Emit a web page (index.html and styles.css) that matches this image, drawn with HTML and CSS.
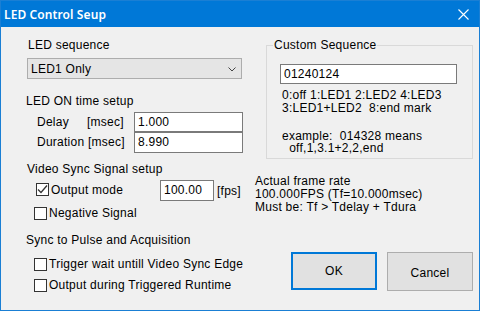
FILE: index.html
```html
<!DOCTYPE html>
<html>
<head>
<meta charset="utf-8">
<link rel="stylesheet" href="styles.css">
</head>
<body>
<div class="window">
  <div class="titlebar">
    <span class="title">LED Control Seup</span>
    <svg class="close" width="11" height="11" viewBox="0 0 11 11"><path d="M0.5 0.5 L10.5 10.5 M10.5 0.5 L0.5 10.5" stroke="#fff" stroke-width="1.1" fill="none"/></svg>
  </div>
  <div class="client">
    <div class="left">
      <div class="lbl seq-lbl">LED sequence</div>
      <div class="select">
        <span>LED1 Only</span>
        <svg class="chev" width="8" height="5" viewBox="0 0 8 5"><path d="M0.5 0.5 L4 4 L7.5 0.5" stroke="#444" stroke-width="1" fill="none"/></svg>
      </div>
      <div class="lbl on-lbl">LED ON time setup</div>
      <div class="field-row row-delay">
        <span class="fl"><span class="fl-name">Delay</span>[msec]</span>
        <span class="input w-time">1.000</span>
      </div>
      <div class="field-row row-dur">
        <span class="fl">Duration [msec]</span>
        <span class="input w-time">8.990</span>
      </div>
      <div class="lbl vs-lbl">Video Sync Signal setup</div>
      <div class="field-row row-out">
        <span class="cbl cbl-out"><span class="cb"><svg width="11" height="11" viewBox="0 0 11 11"><path d="M1 5.5 L4 8.5 L10 1.5" stroke="#333" stroke-width="1.3" fill="none"/></svg></span><span>Output mode</span></span>
        <span class="input w-fps">100.00</span>
        <span class="unit">[fps]</span>
      </div>
      <div class="cbl row-neg"><span class="cb"></span><span>Negative Signal</span></div>
      <div class="lbl sync-lbl">Sync to Pulse and Acquisition</div>
      <div class="cbl row-trig"><span class="cb"></span><span>Trigger wait untill Video Sync Edge</span></div>
      <div class="cbl row-odr"><span class="cb"></span><span>Output during Triggered Runtime</span></div>
    </div>
    <div class="right">
      <div class="group">
        <span class="legend">Custom Sequence</span>
        <span class="input w-seq">01240124</span>
        <div class="help help1">0:off 1:LED1 2:LED2 4:LED3
3:LED1+LED2  8:end mark</div>
        <div class="help help2">example:  014328 means
  off,1,3.1+2,2,end</div>
      </div>
      <div class="rate">Actual frame rate
100.000FPS (Tf=10.000msec)
Must be: Tf &gt; Tdelay + Tdura</div>
      <div class="buttons">
        <span class="btn btn-ok">OK</span>
        <span class="btn btn-cancel">Cancel</span>
      </div>
    </div>
  </div>
</div>
</body>
</html>
```
FILE: styles.css
```css
html, body {
  margin: 0;
  padding: 0;
  background: #f0f0f0;
}
.window {
  width: 480px;
  height: 311px;
  box-sizing: border-box;
  border: 1px solid #1a7fd4;
  background: #f0f0f0;
  font-family: "Liberation Sans", Arial, sans-serif;
  font-size: 12px;
  letter-spacing: 0.25px;
  color: #000;
  overflow: hidden;
}
.titlebar {
  height: 26px;
  margin: -1px -1px 0 -1px;
  padding-top: 1px;
  background: #0078d7;
  display: flex;
  align-items: center;
  justify-content: space-between;
}
.title {
  color: #fff;
  font-family: "Noto Sans", sans-serif;
  font-weight: 600;
  font-size: 12px;
  padding-left: 4px;
  letter-spacing: 0.1px;
}
.close {
  margin-right: 11px;
}
.client {
  display: flex;
}
.left {
  width: 254px;
  box-sizing: border-box;
  padding-left: 25px;
  display: flex;
  flex-direction: column;
  align-items: flex-start;
}
.lbl {
  line-height: 14px;
  height: 14px;
}
.seq-lbl { margin-top: 11px; margin-left: 2px; }
.select {
  margin-top: 6px;
  margin-left: 1px;
  width: 215px;
  height: 21px;
  box-sizing: border-box;
  border: 1px solid #adadad;
  background: #e5e5e5;
  display: flex;
  align-items: center;
  justify-content: space-between;
  padding: 0 5px 0 3px;
}
.chev { margin-top: 1px; }
.on-lbl { margin-top: 15px; }
.field-row {
  display: flex;
  align-items: center;
}
.row-delay { margin-top: 4px; height: 20px; margin-left: 11px; }
.row-dur { height: 20px; margin-left: 11px; }
.fl { width: 97px; white-space: nowrap; }
.fl-name { display: inline-block; width: 50px; }
.input {
  box-sizing: border-box;
  border: 1px solid #7a7a7a;
  background: #fff;
  height: 20px;
  line-height: 18px;
  padding-left: 3px;
}
.w-time { width: 109px; }
.row-dur .w-time { height: 21px; }
.vs-lbl { margin-top: 10px; margin-left: 1px; }
.row-out { margin-top: 4px; height: 21px; margin-left: 10px; }
.cbl {
  display: flex;
  align-items: center;
  gap: 2px;
  height: 14px;
  white-space: nowrap;
}
.cbl-out { width: 124px; margin-top: -2px; }
.cb {
  width: 13px;
  height: 13px;
  box-sizing: border-box;
  border: 1px solid #333;
  background: #fff;
  display: flex;
  align-items: center;
  justify-content: center;
  flex: none;
}
.w-fps { width: 54px; height: 21px; line-height: 19px; }
.unit { margin-left: 3px; }
.row-neg { margin-top: 5px; margin-left: 8px; }
.sync-lbl { margin-top: 13px; }
.row-trig { margin-top: 10px; margin-left: 8px; }
.row-odr { margin-top: 7px; margin-left: 8px; }

.right {
  display: flex;
  flex-direction: column;
  align-items: flex-start;
}
.group {
  margin-top: 18px;
  margin-left: 11px;
  width: 207px;
  height: 114px;
  box-sizing: border-box;
  border: 1px solid #d9d9d9;
  display: flex;
  flex-direction: column;
  align-items: flex-start;
}
.legend {
  margin-top: -8px;
  margin-left: 6px;
  padding: 0 1px;
  background: #f0f0f0;
  line-height: 14px;
  height: 14px;
}
.w-seq {
  margin-top: 12px;
  margin-left: 13px;
  width: 177px;
}
.help {
  white-space: pre;
  margin-left: 15px;
}
.help1 { margin-top: 5px; line-height: 13px; }
.help2 { margin-top: 15px; line-height: 12px; }
.rate {
  white-space: pre;
  line-height: 13px;
  margin-top: 16px;
}
.buttons {
  display: flex;
  gap: 10px;
  margin-top: 38px;
  margin-left: 36px;
  align-items: flex-start;
}
.btn {
  width: 86px;
  box-sizing: border-box;
  background: #e1e1e1;
  display: flex;
  align-items: center;
  justify-content: center;
}
.btn-ok {
  height: 38px;
  border: 2px solid #0078d7;
}
.btn-cancel {
  height: 39px;
  border: 1px solid #adadad;
  padding-top: 2px;
}
```
